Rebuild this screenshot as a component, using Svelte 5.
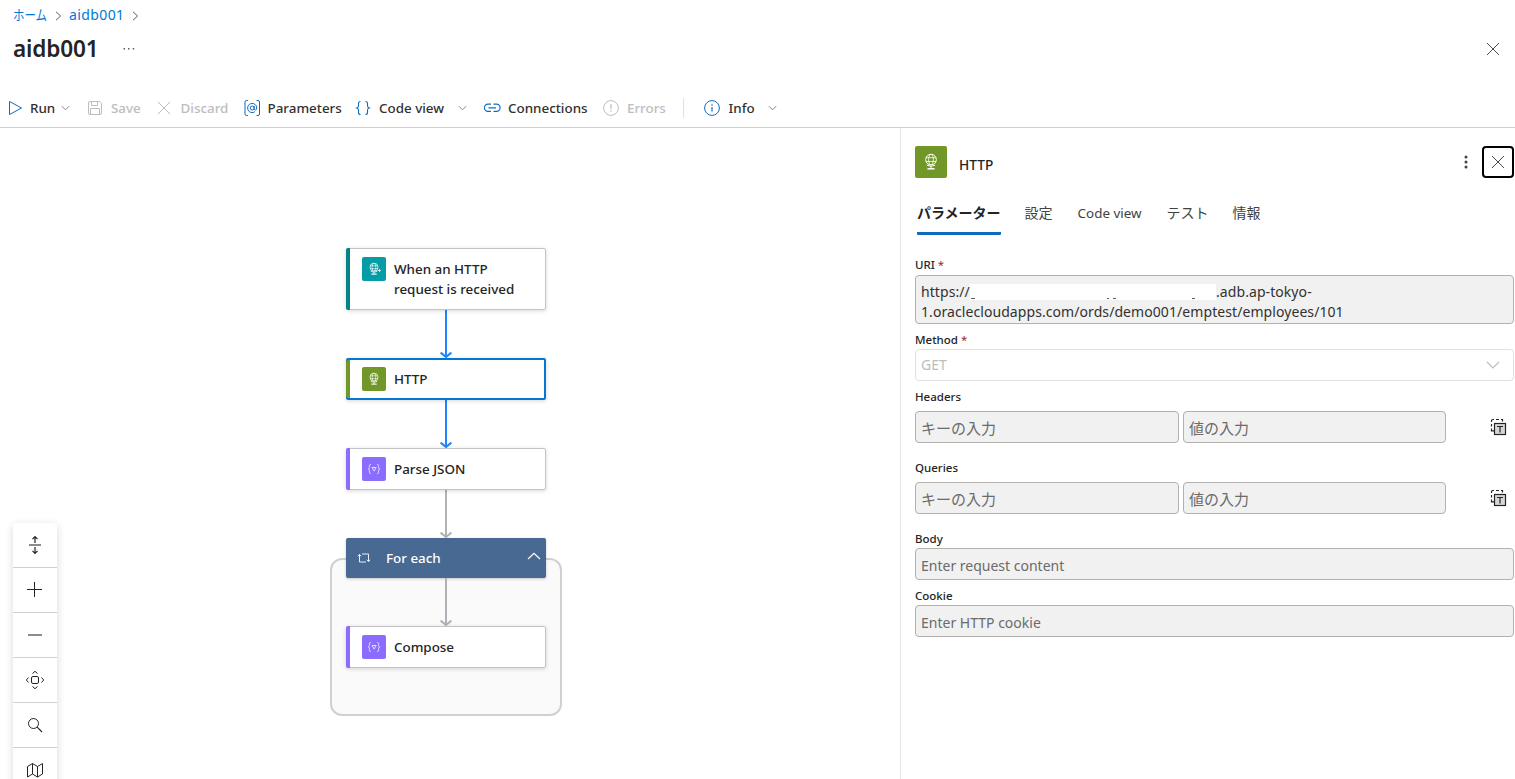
<script>
  const commands = [
    { icon: 'run', label: 'Run', width: 79, iconWidth: 22, textWidth: 26, chevron: 5 },
    { icon: 'save', label: 'Save', width: 69, iconWidth: 24, disabled: true },
    { icon: 'discard', label: 'Discard', width: 88, iconWidth: 24.5, disabled: true },
    { icon: 'params', label: 'Parameters', width: 111, iconWidth: 23.5 },
    { icon: 'code', label: 'Code view', width: 129, iconWidth: 24, textWidth: 66, chevron: 13 },
    { icon: 'link', label: 'Connections', width: 119, iconWidth: 24 },
    { icon: 'error', label: 'Errors', width: 80, iconWidth: 24, disabled: true },
    { icon: 'info', label: 'Info', width: 90, iconWidth: 24.5, textWidth: 26, chevron: 13, divided: true }
  ];
  const tabs = ['パラメーター', '設定', 'Code view', 'テスト', '情報'];
  const tools = ['expand', 'plus', 'minus', 'fit', 'search', 'map'];
</script>

{#snippet chevron()}
  <svg width="9" height="6" viewBox="0 0 10 6"><path d="M1 1l4 4 4-4" fill="none" stroke="#797775" /></svg>
{/snippet}

{#snippet globe(size, trigger)}
  <svg width={size} height={size} viewBox="0 0 24 24" fill="none" stroke="#fff" stroke-width=".75">
    <circle cx="12" cy="10.2" r="4" />
    <ellipse cx="12" cy="10.2" rx="1.8" ry="4" stroke-width=".6" />
    <path d="M8.3 8.8h7.4M8.3 11.6h7.400" stroke-width=".6" />
    <path d="M8.800 14.300q3.200 1.900 6.400 0M12 15.200v2" />
    <path d="M9.300 17.100h5.400" stroke-width="1.100" />
    {#if trigger}<path d="M15.500 13.500h3M17 12l1.500 1.500L17 15" />{/if}
  </svg>
{/snippet}

{#snippet braces()}
  <svg width="24" height="24" viewBox="0 0 24 24" fill="none" stroke="#e3daff">
    <path d="M9 7.500c-1.500 0-1.600.5-1.600 1.600v1.400c0 .9-.3 1.400-1.300 1.500 1 .1 1.300.6 1.300 1.500v1.400c0 1.100.1 1.600 1.600 1.600M15 7.500c1.500 0 1.600.5 1.600 1.600v1.400c0 .9.3 1.400 1.300 1.500-1 .1-1.300.6-1.300 1.500v1.400c0 1.100-.1 1.600-1.600 1.600M10 10.500h4.200l-2.100 3.600z" />
  </svg>
{/snippet}

{#snippet edge(color)}
  <svg class="edge" width="16" height="48" viewBox="0 0 16 48" fill="none" stroke={color} stroke-width="2">
    <path d="M8 0v46M2.600 42.600L8 47l5.400-4.400" />
  </svg>
{/snippet}

{#snippet cross()}
  <svg width="14" height="14" viewBox="0 0 14 14"><path d="M1 1l12 12M13 1L1 13" stroke="#424242" stroke-width=".95" /></svg>
{/snippet}

{#snippet template()}
  <svg class="template" width="18" height="18" viewBox="0 0 18 18" fill="none" stroke="#242424">
    <path d="M1.500 4V2.800Q1.500 1.500 2.800 1.500H4M6 1.500h3M11 1.500h1.500v2M1.500 6v2.500M1.500 10.500v2.300H4" stroke-width="1.200" />
    <rect x="4.500" y="5.500" width="11" height="11" fill="#d6d6d6" stroke-width="1.200" />
    <path d="M7 8.500h6M10 8.500v6" stroke-width="1.200" />
  </svg>
{/snippet}

<div class="page">
  <header>
    <nav>
      <span class="home"><span>ホーム</span></span>
      <svg width="7" height="10" viewBox="0 0 7 10"><path d="M1 .8L5.600 5 1 9.200" fill="none" stroke="#605e5c" /></svg>
      <span class="crumb">aidb001</span>
      <svg width="7" height="10" viewBox="0 0 7 10"><path d="M1 .8L5.600 5 1 9.200" fill="none" stroke="#605e5c" /></svg>
    </nav>
    <div class="title">
      <h1>aidb001</h1>
      <svg width="12" height="4" viewBox="0 0 12 4" fill="#605e5c"><path d="M.5 1h1.500v1.500H.5zM5 1h1.500v1.500H5zM9.700 1h1.500v1.500H9.700z" /></svg>
      <span class="close">{@render cross()}</span>
    </div>
  </header>

  <div class="commands">
    {#each commands as c}
      <div class="command" class:disabled={c.disabled} class:divided={c.divided} style="width:{c.width}px">
        <span class="cicon" style="width:{c.iconWidth}px">
          {#if c.icon === 'run'}
            <svg width="16" height="16" viewBox="0 0 16 16"><path d="M1.500 1.500v13L13.500 8z" fill="none" stroke="#0f6cbd" stroke-linejoin="round" /></svg>
          {:else if c.icon === 'save'}
            <svg width="16" height="16" viewBox="0 0 16 16" fill="none" stroke="#bdbdbd"><path d="M3 1.500h9.500l2 2V13q0 1.500-1.500 1.500H3Q1.500 14.500 1.500 13V3Q1.500 1.500 3 1.500zM4.500 1.500v4h6v-4M3.500 14.500v-6h9v6" /></svg>
          {:else if c.icon === 'discard'}
            <svg width="16" height="16" viewBox="0 0 16 16"><path d="M2 2l12 12M14 2L2 14" stroke="#bdbdbd" /></svg>
          {:else if c.icon === 'params'}
            <svg width="17" height="18" viewBox="0 0 17 18" fill="none" stroke="#0f6cbd"><path d="M4 1.500H2.500Q1 1.500 1 3v12q0 1.500 1.500 1.500H4M12.500 1.500H14q1.500 0 1.500 1.500v12q0 1.500-1.500 1.500h-1.500" /><circle cx="8.200" cy="9" r="2" /><path d="M10.200 7v2.400q0 1.600 1.300 1.600 1.300-.2 1.300-2a4.600 4.600 0 1 0-2 3.800" /></svg>
          {:else if c.icon === 'code'}
            <svg width="16" height="16" viewBox="0 0 16 16" fill="none" stroke="#0f6cbd" stroke-width="1.100"><path d="M5.500 1.500Q3.500 1.500 3.500 3.500v2.300Q3.500 7.500 1.800 8q1.700.5 1.700 2.200v2.300q0 2 2 2M10.500 1.500q2 0 2 2v2.300q0 1.700 1.700 2.200-1.700.5-1.700 2.200v2.300q0 2-2 2" /></svg>
          {:else if c.icon === 'link'}
            <svg width="17" height="16" viewBox="0 0 17 16" fill="none" stroke="#0f6cbd" stroke-width="1.200"><path d="M7 4.200H4a3.600 3.600 0 0 0 0 7.200h3M9.500 4.200h3a3.600 3.600 0 0 1 0 7.200h-3M4.500 7.800H12" /></svg>
          {:else}
            <svg width="16" height="16" viewBox="0 0 16 16" fill="none" stroke={c.icon === 'info' ? '#0f6cbd' : '#bdbdbd'}><circle cx="8" cy="8" r="7.400" />
              {#if c.icon === 'info'}<path d="M8 7v4.500M8 4.300v1.400" stroke-width="1.200" />{:else}<path d="M8 4v5M8 10.300v1.400" stroke-width="1.200" />{/if}
            </svg>
          {/if}
        </span>
        <span class="clabel" style={c.textWidth ? `width:${c.textWidth}px` : ''}>{c.label}</span>
        {#if c.chevron}<span class="cchev" style="margin-left:{c.chevron}px">{@render chevron()}</span>{/if}
      </div>
    {/each}
  </div>

  <main>
    <section class="canvas">
      <div class="flow">
        <div class="node tall" style="--accent:#038387">
          <span class="glyph teal">{@render globe(24, true)}</span>
          <span class="name">When an HTTP<br />request is received</span>
        </div>
        {@render edge('#1f85ff')}
        <div class="node selected" style="--accent:#709727">
          <span class="glyph green">{@render globe(24, false)}</span><span class="name">HTTP</span>
        </div>
        {@render edge('#1f85ff')}
        <div class="node" style="--accent:#8c6cff">
          <span class="glyph purple">{@render braces()}</span><span class="name">Parse JSON</span>
        </div>
        {@render edge('#b1b1b7')}
        <div class="scope">
          <div class="foreach">
            <svg width="14" height="12" viewBox="0 0 14 12" fill="none" stroke="#fff" stroke-width=".9"><path d="M2.500 2.500v7.500H9M.8 4.200L2.500 2.500 4.200 4.200M5 2h6.500v7.500M9.800 7.800l1.700 1.700 1.700-1.700" /></svg>
            <span>For each</span>
            <svg class="up" width="14" height="8" viewBox="0 0 14 8"><path d="M1 7l6-5.700L13 7" fill="none" stroke="#fff" stroke-width="1.200" /></svg>
          </div>
          {@render edge('#b1b1b7')}
          <div class="node" style="--accent:#8c6cff">
            <span class="glyph purple">{@render braces()}</span><span class="name">Compose</span>
          </div>
        </div>
      </div>

      <div class="tools">
        {#each tools as t}
          <div class="tool">
            <svg width="20" height="20" viewBox="0 0 20 20" fill="none" stroke="#242424">
              {#if t === 'expand'}
                <path d="M10 8V2M7.500 4.200L10 1.700l2.500 2.500M10 12v6M7.500 15.800l2.500 2.500 2.500-2.500" stroke-width="1.200" /><path d="M4 10h12" stroke="#8c8c8c" stroke-width="2" />
              {:else if t === 'plus'}
                <path d="M9.500 2v15M2 9.500h15" />
              {:else if t === 'minus'}
                <path d="M3 10h14" stroke="#8c8c8c" stroke-width="2" />
              {:else if t === 'fit'}
                <rect x="6.500" y="6.500" width="7" height="7" rx="1.500" /><path d="M7.500 3.500L10 1.300l2.500 2.200M7.500 16.500l2.500 2.200 2.500-2.200M3.500 7.500L1.300 10l2.200 2.500M16.500 7.500l2.200 2.500-2.200 2.500" />
              {:else if t === 'search'}
                <circle cx="8.500" cy="8.500" r="5" /><path d="M12.200 12.200L17 17" stroke-width="1.100" />
              {:else}
                <path d="M2.500 6.500L7.500 3.500l5 3 5-3v10.500l-5 3-5-3-5 3zM7.500 3.500V14M12.500 6.500V17" stroke-linejoin="round" />
              {/if}
            </svg>
          </div>
        {/each}
      </div>
    </section>

    <aside>
      <div class="phead">
        <span class="pglyph">{@render globe(32, false)}</span>
        <span class="pname">HTTP</span>
        <svg class="more" width="4" height="14" viewBox="0 0 4 14" fill="#424242"><circle cx="2" cy="2" r="1.500" /><circle cx="2" cy="7" r="1.500" /><circle cx="2" cy="12" r="1.500" /></svg>
        <span class="pclose">{@render cross()}</span>
      </div>
      <div class="tabs">
        {#each tabs as t, i}<span class="tab" class:active={i === 0} class:latin={i === 2}>{t}</span>{/each}
      </div>

      <div class="label uri-label">URI <i>*</i></div>
      <div class="field uri">
        <div class="line"><span class="proto">https://</span><svg width="246" height="16" viewBox="0 0 246 16"><path d="M0 0h246v16H0z" fill="#fff" /><path d="M1 14.500h4M137 14.500h2M143 14.500h3M222 14.500h3" stroke="#605e5c" /></svg><span class="host">.adb.ap-tokyo-</span></div>
        <div class="line">1.oraclecloudapps.com/ords/demo001/emptest/employees/101</div>
      </div>
      <div class="label">Method <i>*</i></div>
      <div class="field select"><span>GET</span><svg width="14" height="8" viewBox="0 0 14 8"><path d="M1 1l6 6 6-6" fill="none" stroke="#bdbdbd" stroke-width="1.200" /></svg></div>
      {#each ['Headers', 'Queries'] as group}
        <div class="label pair-label">{group}</div>
        <div class="pair">
          <div class="field jp">キーの入力</div>
          <div class="field jp">値の入力</div>
          {@render template()}
        </div>
      {/each}
      <div class="label body-label">Body</div>
      <div class="field">Enter request content</div>
      <div class="label">Cookie</div>
      <div class="field">Enter HTTP cookie</div>
    </aside>
  </main>
</div>

<style>
  :global(body) { overflow: hidden; background: #fff; }
  .page { width: 1515px; height: 779px; display: flex; flex-direction: column; overflow: hidden; background: #fff; color: #242424; font: 13.4px "Noto Sans", "Noto Sans CJK JP", sans-serif; white-space: nowrap; }
  svg { display: block; flex: none; }
  header { height: 89px; flex: none; }
  nav { display: flex; align-items: center; height: 30px; padding-left: 13px; color: #0078d4; font-size: 14px; }
  nav svg { margin-top: 1px; }
  .home { width: 42px; margin-top: -2px; }
  .home span { display: inline-block; transform: scaleX(.82); transform-origin: left; }
  .crumb { width: 55px; margin: -2px 8px 0 7px; font-size: 14px; letter-spacing: .4px; }
  .title { display: flex; align-items: center; height: 38px; padding: 0 15px 0 13px; }
  h1 { margin: 0; width: 110px; font-size: 22.6px; font-weight: 600; line-height: 36px; letter-spacing: -.15px; }
  .close { margin-left: auto; }
  .commands { display: flex; height: 38px; flex: none; padding-left: 8px; border-bottom: 1px solid #d1d1d1; }
  .command { display: flex; align-items: center; font-weight: 500; color: #323130; }
  .disabled { color: #bdbdbd; }
  .divided { position: relative; padding-left: 21px; }
  .divided::before { content: ""; width: 1px; height: 20px; background: #e0e0e0; margin-left: -21px; margin-right: 20px; }
  main { flex: 1; display: flex; min-height: 0; }
  .canvas { width: 900px; position: relative; }
  .flow { width: 232px; margin-left: 330px; padding-top: 120px; display: flex; flex-direction: column; align-items: center; }
  .node { position: relative; box-sizing: border-box; width: 200px; height: 42px; padding: 8px 0 0 15px; display: flex; border: 1px solid #c4c4c8; border-radius: 2px; background: #fff; box-shadow: 0 1px 4px rgba(0,0,0,.16); }
  .node::before { content: ""; position: absolute; left: -1px; top: -1px; bottom: -1px; width: 4px; background: var(--accent); border-radius: 2px 0 0 2px; }
  .tall { height: 62px; }
  .selected { border: 2px solid #0078d4; padding: 7px 0 0 14px; }
  .selected::before { left: -2px; top: 0; bottom: 0; }
  .glyph { width: 24px; height: 24px; border-radius: 2px; margin-right: 8px; }
  .teal { background: #049da6; }
  .green, .pglyph { background: #709727; }
  .purple { background: #8c6cff; }
  .name { font-weight: 500; line-height: 20px; padding-top: 2px; }
  .scope { position: relative; z-index: 0; width: 232px; height: 178px; display: flex; flex-direction: column; align-items: center; }
  .scope::before { content: ""; position: absolute; z-index: -1; inset: 20px 0 0; border: 2px solid #d0d0d0; border-radius: 12px; background: #fafafa; }
  .foreach { box-sizing: border-box; width: 200px; height: 40px; flex: none; padding: 0 5px 0 11px; display: flex; align-items: center; border-radius: 2px; background: #486991; color: #fff; font-weight: 500; box-shadow: 0 1px 3px rgba(0,0,0,.2); }
  .foreach span { margin-left: 15px; }
  .up { margin: -4px 0 0 auto; }
  .tools { position: absolute; left: 13px; top: 395px; width: 44px; border-radius: 4px; background: #fff; box-shadow: 0 2px 8px rgba(0,0,0,.16); }
  .tool { box-sizing: border-box; height: 45px; padding: 12px; border-bottom: 1px solid #d1d1d1; }
  aside { box-sizing: border-box; width: 615px; padding: 18px 1px 0 14px; border-left: 1px solid #e5e5e5; }
  .phead { display: flex; align-items: center; height: 32px; }
  .pglyph { width: 32px; height: 32px; border-radius: 2px; }
  .pname { margin: 5px 0 0 12px; font-size: 13.700px; font-weight: 500; }
  .more { margin: 0 14px 0 auto; }
  .pclose { box-sizing: border-box; width: 32px; height: 32px; padding: 7px; border: 2px solid #000; border-radius: 4px; }
  .tabs { display: flex; height: 57px; padding-left: 2px; gap: 24px; color: #424242; font-size: 14px; line-height: 20px; }
  .tab { box-sizing: border-box; padding-top: 25px; height: 57px; }
  .tab.latin { font-size: 13.400px; width: 65px; padding-left: 1px; margin-right: 1px; }
  .active { color: #242424; font-weight: 700; border-bottom: 3px solid #0f6cbd; border-radius: 1px; }
  .label { height: 16px; padding-top: 8px; padding-bottom: 1px; line-height: 16px; font-size: 11.500px; font-weight: 500; }
  .label i { color: #a4262c; font-style: normal; font-weight: 400; }
  .uri-label { padding-top: 22px; padding-bottom: 2px; }
  .field { box-sizing: border-box; height: 32px; padding: 2px 5px 0; border: 1px solid #b3b0ad; border-radius: 4px; background: #f1f1f1; color: #6b6b6b; font-size: 14px; line-height: 30px; }
  .uri { height: 49px; padding: 6px 5px 0; color: #323130; letter-spacing: .075px; }
  .line { display: flex; height: 20px; line-height: 20px; }
  .proto { width: 49px; }
  .line svg { margin-top: 2px; }
  .select { display: flex; align-items: center; justify-content: space-between; padding: 0 13px 0 5px; background: #fff; border-color: #e0e0e0; color: #bdbdbd; }
  .pair { display: flex; gap: 4px; height: 32px; margin-top: 5px; }
  .pair .field { width: 264px; }
  .pair .field + .field { width: 263px; }
  .pair .jp { font-size: 15px; padding-top: 1px; }
  .template { margin: 7px 0 0 40px; }
  .pair + .pair-label, .body-label { padding-top: 17px; }
</style>
